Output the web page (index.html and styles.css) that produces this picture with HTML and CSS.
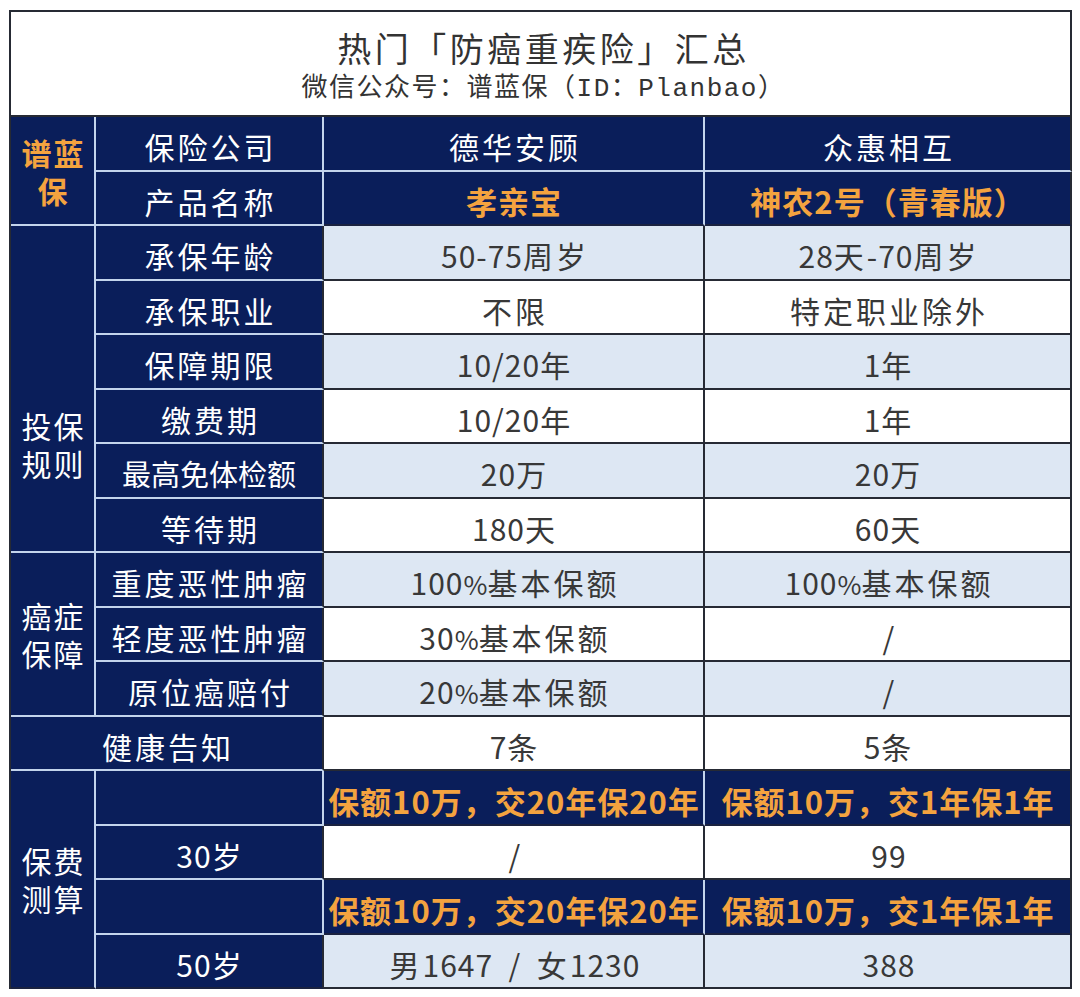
FILE: index.html
```html
<!DOCTYPE html>
<html lang="zh-CN">
<head>
<meta charset="utf-8">
<title>热门「防癌重疾险」汇总</title>
<link rel="stylesheet" href="styles.css">
</head>
<body>
<div class="sheet">
  <div class="cell title call">
    <div class="t1">热门「防癌重疾险」汇总</div>
    <div class="t2">微信公众号：谱蓝保（ID：Planbao）</div>
  </div>

  <div class="cell nv grp brand r2"><span class="ln">谱蓝</span><span class="ln">保</span></div>
  <div class="cell nv">保险公司</div>
  <div class="cell nv">德华安顾</div>
  <div class="cell nv rd">众惠相互</div>

  <div class="cell nv">产品名称</div>
  <div class="cell nv or bd">孝亲宝</div>
  <div class="cell nv or bd rd">神农2号（青春版）</div>

  <div class="cell nv grp r6 low"><span class="ln">投保</span><span class="ln">规则</span></div>
  <div class="cell nv rd">承保年龄</div>
  <div class="cell lb"><span class="n">50-75</span>周岁</div>
  <div class="cell lb"><span class="n">28</span>天<span class="n">-70</span>周岁</div>

  <div class="cell nv rd">承保职业</div>
  <div class="cell">不限</div>
  <div class="cell">特定职业除外</div>

  <div class="cell nv rd">保障期限</div>
  <div class="cell lb"><span class="n">10/20</span>年</div>
  <div class="cell lb"><span class="n">1</span>年</div>

  <div class="cell nv rd">缴费期</div>
  <div class="cell"><span class="n">10/20</span>年</div>
  <div class="cell"><span class="n">1</span>年</div>

  <div class="cell nv rd tight">最高免体检额</div>
  <div class="cell lb"><span class="n">20</span>万</div>
  <div class="cell lb"><span class="n">20</span>万</div>

  <div class="cell nv rd">等待期</div>
  <div class="cell"><span class="n">180</span>天</div>
  <div class="cell"><span class="n">60</span>天</div>

  <div class="cell nv grp r3"><span class="ln">癌症</span><span class="ln">保障</span></div>
  <div class="cell nv rd">重度恶性肿瘤</div>
  <div class="cell lb"><span class="n">100<span class="pc">%</span></span>基本保额</div>
  <div class="cell lb"><span class="n">100<span class="pc">%</span></span>基本保额</div>

  <div class="cell nv rd">轻度恶性肿瘤</div>
  <div class="cell"><span class="n">30<span class="pc">%</span></span>基本保额</div>
  <div class="cell"><span class="n">/</span></div>

  <div class="cell nv rd">原位癌赔付</div>
  <div class="cell lb"><span class="n">20<span class="pc">%</span></span>基本保额</div>
  <div class="cell lb"><span class="n">/</span></div>

  <div class="cell nv rd c2">健康告知</div>
  <div class="cell"><span class="n">7</span>条</div>
  <div class="cell"><span class="n">5</span>条</div>

  <div class="cell nv grp r4 bd"><span class="ln">保费</span><span class="ln">测算</span></div>
  <div class="cell nv"></div>
  <div class="cell nv or bd">保额10万，交20年保20年</div>
  <div class="cell nv or bd rd">保额10万，交1年保1年</div>

  <div class="cell nv rd"><span class="n">30</span>岁</div>
  <div class="cell"><span class="n">/</span></div>
  <div class="cell"><span class="n">99</span></div>

  <div class="cell nv"></div>
  <div class="cell nv or bd">保额10万，交20年保20年</div>
  <div class="cell nv or bd rd">保额10万，交1年保1年</div>

  <div class="cell nv rd bd"><span class="n">50</span>岁</div>
  <div class="cell lb">男<span class="n">1647  /  </span>女<span class="n">1230</span></div>
  <div class="cell lb"><span class="n">388</span></div>
</div>
</body>
</html>
```

FILE: styles.css
```css
body {
  margin: 0;
  background: #ffffff;
  font-family: "Noto Sans CJK SC", sans-serif;
}

.sheet {
  margin: 10px 0 0 9px;
  width: 1063px;
  height: 979px;
  box-sizing: border-box;
  border-top: 2px solid #262a34;
  border-left: 2px solid #262a34;
  display: grid;
  grid-template-columns: 85px 228px 381px 367px;
  grid-template-rows: 105px repeat(16, 1fr);
}

.cell {
  box-sizing: border-box;
  border-right: 2px solid #262a34;
  border-bottom: 2px solid #262a34;
  display: flex;
  align-items: center;
  justify-content: center;
  text-align: center;
  font-size: 30px;
  letter-spacing: 3px;
  padding: 6px 0 0 3px;
  line-height: 1.2;
  color: #383838;
  background: #ffffff;
  white-space: pre;
}

.n {
  letter-spacing: 1px;
}

.pc {
  font-size: 26px;
  letter-spacing: 0;
}

.title {
  flex-direction: column;
  justify-content: flex-start;
  padding: 14px 0 0 6px;
}

.t1 {
  font-size: 34px;
  letter-spacing: 3.5px;
  line-height: 44px;
  color: #333333;
}

.t2 {
  font-family: "Liberation Mono", "Noto Sans CJK SC", monospace;
  font-size: 26px;
  letter-spacing: 1.5px;
  line-height: 38px;
  color: #333333;
}

.nv {
  background: #0a1e5a;
  color: #ffffff;
  border-color: #c3d4ec;
}

.lb {
  background: #dde7f3;
}

.rd {
  border-right-color: #262a34;
}

.bd {
  border-bottom-color: #1a2240;
}

.or {
  color: #f4a33f;
  font-weight: 700;
  font-size: 31px;
  letter-spacing: 1px;
  padding-left: 1px;
}

.grp {
  flex-direction: column;
  letter-spacing: 2px;
  padding: 0 0 0 2px;
}

.ln {
  display: block;
  height: 38px;
  line-height: 38px;
}

.brand {
  color: #f4a33f;
  font-weight: 700;
}

.low {
  padding-top: 110px;
}

.tight {
  font-size: 29px;
  letter-spacing: 0;
  padding-left: 0;
}

.call { grid-column: 1 / -1; }
.c2 { grid-column: span 2; }
.r2 { grid-row: span 2; }
.r3 { grid-row: span 3; }
.r4 { grid-row: span 4; }
.r6 { grid-row: span 6; }
```
